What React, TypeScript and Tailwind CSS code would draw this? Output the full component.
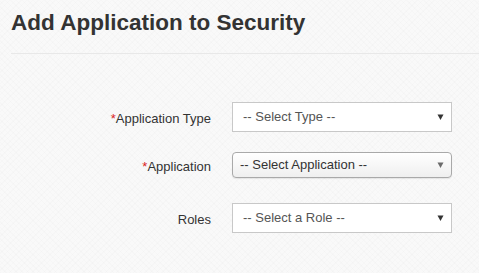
import type { ReactNode } from 'react';

const font = { fontFamily: '"Liberation Sans", Arial, sans-serif' };

function Arrow({ muted = false }: { muted?: boolean }) {
  return (
    <svg
      width="7"
      height="6"
      viewBox="0 0 7 6"
      className="pointer-events-none absolute right-[8px] top-1/2 -translate-y-1/2"
    >
      <path d="M0.5 0.5h6L3.5 6z" fill={muted ? '#6b6b6b' : '#333'} />
    </svg>
  );
}

function Row({ label, required, children, className = '' }: { label: string; required?: boolean; children: ReactNode; className?: string }) {
  return (
    <div className={`flex items-center ${className}`}>
      <label className="w-[211px] shrink-0 pt-[3px] text-right text-[13px] text-[#333]">
        {required && <span className="text-[#d9231d]">*</span>}
        {label}
      </label>
      <div className="relative ml-[21px] w-[220px]">{children}</div>
    </div>
  );
}

export default function App() {
  return (
    <div
      style={font}
      className="h-[273px] w-[479px] overflow-hidden bg-[#f9f9f9] bg-[repeating-linear-gradient(45deg,rgba(0,0,0,0.012)_0px,rgba(0,0,0,0.012)_1px,transparent_1px,transparent_4px),repeating-linear-gradient(-45deg,rgba(0,0,0,0.012)_0px,rgba(0,0,0,0.012)_1px,transparent_1px,transparent_4px)]"
    >
      <h1 className="ml-[11px] pt-[9px] text-[22.5px] font-bold leading-[28px] text-[#333]">
        Add Application to Security
      </h1>
      <div className="ml-[11px] mt-[16px] h-px bg-[#e8e8e8]" />

      <div className="pt-[48px]">
        <Row label="Application Type" required>
          <select className="h-[30px] w-full appearance-none border border-[#c8c8c8] bg-white pl-[10px] text-[13px] text-[#555] outline-none">
            <option>-- Select Type --</option>
          </select>
          <Arrow />
        </Row>

        <Row label="Application" required className="mt-[20px]">
          <select className="h-[26px] w-full appearance-none rounded-[4px] border border-[#a9a9a9] bg-[linear-gradient(#ffffff,#efefef)] pl-[7px] text-[13px] text-[#333] shadow-[0_1px_1px_rgba(0,0,0,0.08)] outline-none">
            <option>-- Select Application --</option>
          </select>
          <Arrow muted />
        </Row>

        <Row label="Roles" className="mt-[25px]">
          <select className="h-[30px] w-full appearance-none border border-[#c8c8c8] bg-white pl-[10px] text-[13px] text-[#555] outline-none">
            <option>-- Select a Role --</option>
          </select>
          <Arrow />
        </Row>
      </div>
    </div>
  );
}
